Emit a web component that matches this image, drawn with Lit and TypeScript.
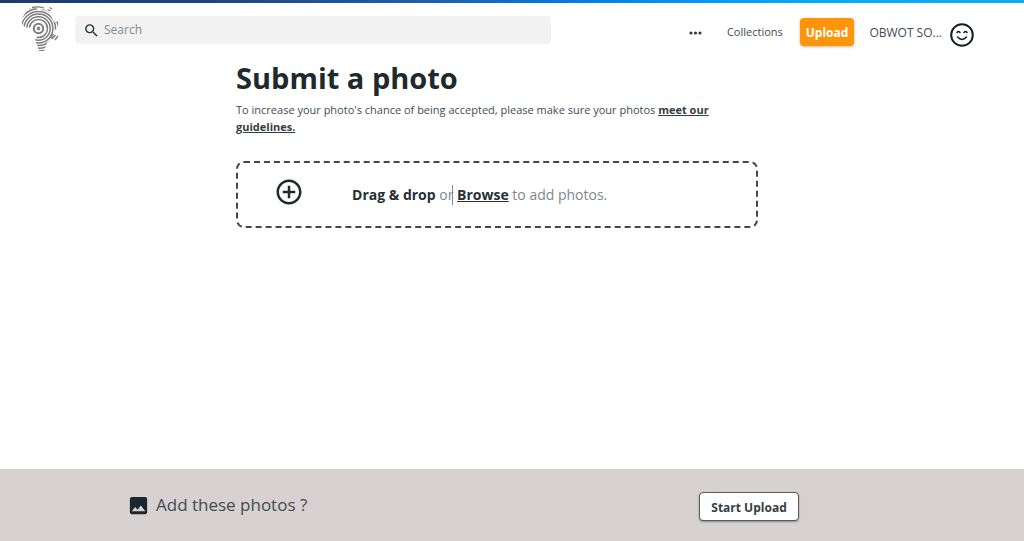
import { LitElement, html, css, svg } from "lit";
import { customElement } from "lit/decorators.js";

const rings = [9, 11.7, 14.4, 17.1, 19.8, 22.5];

@customElement("app-logo")
class AppLogo extends LitElement {
  static styles = css`
    :host { display: block; }
    svg { display: block; width: 40px; height: 46px; }
  `;
  render() {
    return html`<svg viewBox="0 0 40 46" fill="none" stroke="#7c7c7c" role="img" aria-label="Africa logo">
      <defs>
        <clipPath id="land">
          <path d="M1 15 L5 7 L10 2 L16 2 L19 5 L23 3 L30 7 L32 12 L34 16 L39 15 L37 22 L33 26 L33 31 L27 37 L24 45 L19 45 L17 39 L15 34 L18.500 28 L18.500 22 L11 21 L8 22 L3 20 Z" />
        </clipPath>
      </defs>
      <circle cx="18.500" cy="22.500" r="1.900" stroke="none" fill="#8a8a8a" />
      <circle cx="18.500" cy="22.500" r="4.700" stroke-width="2" />
      <g clip-path="url(#land)">
        ${rings.map((r) => svg`<circle cx="18.500" cy="22.500" r=${r} stroke-width="1.500" />`)}
      </g>
      <path d="M12 1.500q6-1.500 12 .5M27.500 3.500l3 1.500M29.500 1.500l2.500 1.500M32 33l3.500-4M35 34l3-4M30.500 32l3-4" stroke-width="1.300" />
    </svg>`;
  }
}

@customElement("app-root")
class AppRoot extends LitElement {
  static styles = css`
    :host {
      display: flex;
      flex-direction: column;
      min-height: 100vh;
      background: #fff;
      color: #424c4f;
      font: 12px/18px "Open Sans", "Noto Sans", sans-serif;
    }
    * { box-sizing: border-box; }
    svg { display: block; flex: none; }
    button, input { font: inherit; color: inherit; }
    button { cursor: pointer; }
    h1, p { margin: 0; }
    a { color: inherit; }
    .stripe {
      height: 3px;
      background: linear-gradient(90deg, #1c3b68 0%, #1d4580 20%, #225ba6 40%, #0878dc 55%, #0896f4 68%, #08aaf4 80%, #10acf2 100%);
    }
    .header {
      display: flex;
      align-items: center;
      height: 58px;
      padding: 0 50px 0 20px;
    }
    .logo { margin-right: 15px; margin-bottom: 6px; }
    .search {
      display: flex;
      align-items: center;
      gap: 4px;
      flex: 0 1 476px;
      height: 28px;
      margin-bottom: 4px;
      padding: 0 8px;
      border-radius: 4px;
      background: #f2f2f2;
    }
    .search input {
      flex: 1;
      min-width: 0;
      padding: 0;
      border: 0;
      outline: 0;
      background: none;
    }
    .search input::placeholder { color: #848b90; opacity: 1; }
    .nav {
      display: flex;
      align-items: center;
      margin-left: auto;
    }
    .more {
      display: flex;
      padding: 2px 0 0;
      margin-right: 24px;
      border: 0;
      background: none;
    }
    .nav a { text-decoration: none; }
    .collections { font-size: 11px; }
    .upload {
      height: 28px;
      padding: 2px 6px 0;
      margin: 0 15px 0 17px;
      border: 0;
      border-radius: 4px;
      background: #fd9409;
      color: #fff;
      font-weight: 700;
      box-shadow: 0 1px 3px rgba(160, 80, 0, 0.4);
    }
    .user {
      display: flex;
      gap: 8px;
      margin-top: 6px;
      line-height: 20px;
    }
    .main {
      flex: 1;
      width: 51%;
      margin-left: 23.05%;
    }
    h1 {
      color: #20292c;
      font-size: 29px;
      line-height: 34px;
      font-weight: 700;
    }
    .intro { margin-top: 6px; font-size: 11px; line-height: 17px; }
    .intro a { font-weight: 700; color: #343e41; }
    .drop {
      display: flex;
      align-items: center;
      gap: 48px;
      height: 67px;
      margin-top: 26px;
      padding: 0 36px;
      border: 2px dashed #40484a;
      border-radius: 8px;
      color: #7e878c;
      font-size: 14px;
      line-height: 20px;
    }
    .drop svg { margin-bottom: 6px; }
    .drop b, .browse { color: #273034; font-weight: 700; }
    .browse {
      padding: 0;
      border: 0;
      background: none;
      text-decoration: underline;
    }
    .word { position: relative; }
    .caret {
      position: absolute;
      right: 0;
      top: 0;
      width: 1px;
      height: 20px;
      background: #7e878c;
    }
    .footer {
      display: flex;
      align-items: center;
      justify-content: space-between;
      height: 72px;
      padding: 0 22% 0 127px;
      background: #d7d1d1;
    }
    .prompt {
      display: flex;
      align-items: center;
      gap: 6px;
      font-size: 17px;
      line-height: 24px;
    }
    .start {
      height: 29px;
      margin-top: 3px;
      padding: 2px 11px 0;
      border: 1px solid #555b5d;
      border-radius: 4px;
      background: #fff;
      color: #343e41;
      font-weight: 700;
      box-shadow: 0 1px 2px rgba(0, 0, 0, 0.35);
    }
  `;

  render() {
    return html`
      <div class="stripe"></div>
      <header class="header">
        <app-logo class="logo"></app-logo>
        <label class="search">
          <svg width="17" height="17" viewBox="0 0 24 24" fill="#263034"><path d="M15.500 14h-.79l-.28-.27A6.470 6.470 0 0 0 16 9.500 6.500 6.500 0 1 0 9.500 16c1.610 0 3.090-.59 4.230-1.570l.27.28v.79l5 4.990L20.490 19l-4.990-5zm-6 0C7.010 14 5 11.990 5 9.500S7.010 5 9.500 5 14 7.010 14 9.500 11.990 14 9.500 14z" /></svg>
          <input type="search" placeholder="Search" aria-label="Search" />
        </label>
        <nav class="nav">
          <button class="more" aria-label="More">
            <svg width="16" height="16" viewBox="0 0 16 16" fill="#343c3f"><circle cx="4" cy="8" r="1.6" /><circle cx="8.500" cy="8" r="1.6" /><circle cx="13" cy="8" r="1.6" /></svg>
          </button>
          <a class="collections" href="#collections">Collections</a>
          <button class="upload">Upload</button>
          <a class="user" href="#profile">
            <span>OBWOT SO...</span>
            <svg width="24" height="24" viewBox="0 0 24 24" fill="none" stroke="#191f20" stroke-linecap="round">
              <circle cx="12" cy="12" r="10.800" stroke-width="2" />
              <path d="M7 9.500q1.500-2 3 0M14 9.500q1.500-2 3 0M7.500 14q4.500 4.800 9 0" stroke-width="1.5" />
            </svg>
          </a>
        </nav>
      </header>
      <main class="main">
        <h1>Submit a photo</h1>
        <p class="intro">
          To increase your photo's chance of being accepted, please make sure your photos <a href="#guidelines">meet our guidelines.</a>
        </p>
        <section class="drop">
          <svg width="30" height="30" viewBox="0 0 24 24" fill="#20292c"><path d="M13 7h-2v4H7v2h4v4h2v-4h4v-2h-4V7zm-1-5C6.480 2 2 6.480 2 12s4.480 10 10 10 10-4.480 10-10S17.520 2 12 2zm0 18c-4.410 0-8-3.590-8-8s3.590-8 8-8 8 3.590 8 8-3.590 8-8 8z" /></svg>
          <p><b>Drag &amp; drop</b> <span class="word">or<span class="caret"></span></span> <button class="browse">Browse</button> to add photos.</p>
        </section>
      </main>
      <footer class="footer">
        <div class="prompt">
          <svg width="23" height="23" viewBox="0 0 24 24" fill="#1c272d"><path d="M21 19V5c0-1.100-.9-2-2-2H5c-1.100 0-2 .9-2 2v14c0 1.100.9 2 2 2h14c1.100 0 2-.9 2-2zM8.500 13.500l2.500 3.010L14.500 12l4.500 6H5l3.500-4.500z" /></svg>
          <span>Add these photos ?</span>
        </div>
        <button class="start">Start Upload</button>
      </footer>
    `;
  }
}
